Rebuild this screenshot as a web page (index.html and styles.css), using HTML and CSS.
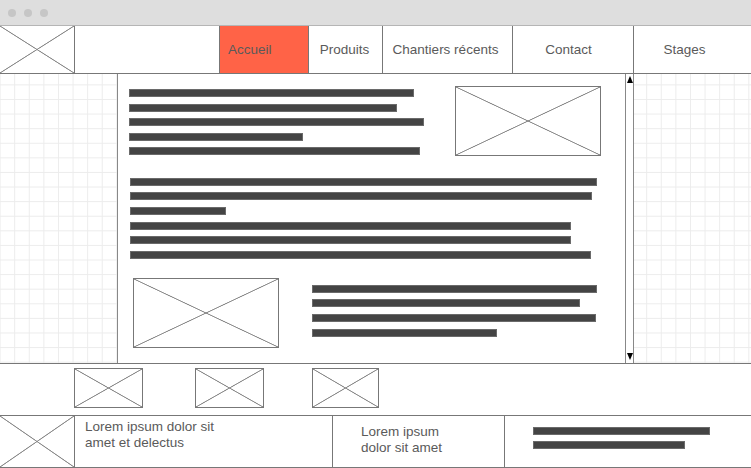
FILE: index.html
```html
<!DOCTYPE html>
<html lang="fr">
<head>
    <meta charset="UTF-8">
    <meta name="viewport" content="width=device-width, initial-scale=1.0">
    <title>Maquette - Accueil</title>
    <link rel="stylesheet" href="styles.css">
</head>
<body>
    <div class="window">
        <div class="titlebar">
            <span class="dot"></span>
            <span class="dot"></span>
            <span class="dot"></span>
        </div>

        <header class="header">
            <div class="logo"><div class="ph ph-bare"></div></div>
            <div class="spacer"></div>
            <nav class="nav">
                <a class="nav-item active" href="#">Accueil</a>
                <a class="nav-item produits" href="#">Produits</a>
                <a class="nav-item chantiers" href="#">Chantiers récents</a>
                <a class="nav-item contact" href="#">Contact</a>
                <a class="nav-item stages" href="#">Stages</a>
            </nav>
        </header>

        <div class="main">
            <div class="gutter gutter-left"></div>
            <div class="content">
                <div class="section1">
                    <div class="lines">
                        <div class="bar" style="width:285px"></div>
                        <div class="bar" style="width:268px"></div>
                        <div class="bar" style="width:295px"></div>
                        <div class="bar" style="width:174px"></div>
                        <div class="bar" style="width:291px"></div>
                    </div>
                    <div class="ph img-top"></div>
                </div>

                <div class="section2 lines">
                    <div class="bar" style="width:467px"></div>
                    <div class="bar" style="width:462px"></div>
                    <div class="bar" style="width:96px"></div>
                    <div class="bar" style="width:441px"></div>
                    <div class="bar" style="width:441px"></div>
                    <div class="bar" style="width:461px"></div>
                </div>

                <div class="section3">
                    <div class="ph img-bottom"></div>
                    <div class="lines">
                        <div class="bar" style="width:285px"></div>
                        <div class="bar" style="width:268px"></div>
                        <div class="bar" style="width:284px"></div>
                        <div class="bar" style="width:185px"></div>
                    </div>
                </div>
            </div>
            <div class="scrollbar">
                <span class="arrow up"></span>
                <span class="arrow down"></span>
            </div>
            <div class="gutter gutter-right"></div>
        </div>

        <div class="strip">
            <div class="ph thumb"></div>
            <div class="ph thumb"></div>
            <div class="ph thumb"></div>
        </div>

        <footer class="footer">
            <div class="logo"><div class="ph ph-bare"></div></div>
            <div class="foot-col foot-one">
                <p>Lorem ipsum dolor sit<br>amet et delectus</p>
            </div>
            <div class="foot-col foot-two">
                <p>Lorem ipsum<br>dolor sit amet</p>
            </div>
            <div class="foot-col foot-three lines">
                <div class="bar" style="width:177px"></div>
                <div class="bar" style="width:152px"></div>
            </div>
        </footer>
    </div>
</body>
</html>
```

FILE: styles.css
```css
body {
    margin: 0;
    font-family: "Liberation Sans", Arial, sans-serif;
    font-size: 13.5px;
    color: #5a5a5a;
    background-color: #fff;
}
.window {
    width: 751px;
    height: 468px;
    overflow: hidden;
}

/* title bar */
.titlebar {
    height: 25px;
    background-color: #dedede;
    border-bottom: 1px solid #b5b5b5;
    display: flex;
    align-items: center;
    gap: 8px;
    padding-left: 8px;
}
.dot {
    width: 8px;
    height: 8px;
    border-radius: 50%;
    background-color: #c6c6c6;
}

/* placeholder picture with a cross */
.ph {
    box-sizing: border-box;
    border: 1px solid #777;
    background:
        linear-gradient(to top right, transparent calc(50% - 0.8px), #8c8c8c calc(50% - 0.2px), #8c8c8c calc(50% + 0.2px), transparent calc(50% + 0.8px)),
        linear-gradient(to bottom right, transparent calc(50% - 0.8px), #8c8c8c calc(50% - 0.2px), #8c8c8c calc(50% + 0.2px), transparent calc(50% + 0.8px));
}
.ph-bare {
    border: none;
    width: 100%;
    height: 100%;
}

/* header */
.header {
    display: flex;
    height: 47px;
    border-bottom: 1px solid #777;
}
.logo {
    width: 74px;
    border-right: 1px solid #777;
    flex: none;
}
.spacer {
    width: 144px;
    flex: none;
}
.nav {
    display: flex;
    flex: 1;
}
.nav-item {
    display: flex;
    align-items: center;
    justify-content: center;
    border-left: 1px solid #777;
    color: #5a5a5a;
    text-decoration: none;
    box-sizing: border-box;
}
.nav-item.active {
    width: 89px;
    background-color: #ff6347;
    justify-content: flex-start;
    padding-left: 8px;
}
.produits { width: 74px; padding-right: 2px; }
.chantiers { width: 130px; padding-right: 4px; }
.contact { width: 121px; padding-right: 9px; }
.stages { width: 118px; padding-right: 16px; }

/* main area */
.main {
    display: flex;
    height: 289px;
    border-bottom: 1px solid #777;
}
.gutter {
    background-image:
        linear-gradient(to right, #ececec 1px, transparent 1px),
        linear-gradient(to bottom, #ececec 1px, transparent 1px);
    background-size: 14.6px 14.6px;
}
.gutter-left {
    width: 117px;
    background-position: 14.2px 10.4px;
}
.gutter-right {
    flex: 1;
    background-position: 12.2px 10.4px;
}
.content {
    width: 508px;
    border-left: 1px solid #888;
    padding: 12px 0 0 11px;
    box-sizing: border-box;
    background-color: #fff;
}
.scrollbar {
    width: 7px;
    border-left: 1px solid #888;
    border-right: 1px solid #888;
    display: flex;
    flex-direction: column;
    justify-content: space-between;
    align-items: center;
    padding: 2px 0 3px;
}
.arrow {
    width: 0;
    height: 0;
    border-left: 3px solid transparent;
    border-right: 3px solid transparent;
}
.arrow.up {
    border-bottom: 7px solid #000;
}
.arrow.down {
    border-top: 7px solid #000;
}

.lines {
    display: flex;
    flex-direction: column;
    gap: 6.6px;
}
.bar {
    height: 8px;
    background-color: #444;
    border: 1px solid #6a6a6a;
    box-sizing: border-box;
}

.section1 {
    display: flex;
    align-items: flex-start;
}
.section1 .lines {
    width: 296px;
    margin-top: 3px;
    gap: 6.5px;
}
.img-top {
    width: 146px;
    height: 70px;
    margin-left: 30px;
}
.section2 {
    margin-top: 21.7px;
    padding-left: 1px;
    gap: 6.7px;
}
.section3 {
    display: flex;
    align-items: flex-start;
    margin-top: 18.4px;
}
.img-bottom {
    width: 146px;
    height: 70px;
    margin-left: 4px;
}
.section3 .lines {
    margin-left: 33px;
    margin-top: 7.3px;
}

/* picture strip */
.strip {
    display: flex;
    height: 52px;
    padding-top: 4px;
    box-sizing: border-box;
    border-bottom: 1px solid #777;
}
.thumb {
    width: 69px;
    height: 40px;
    margin-left: 74px;
}
.thumb:nth-child(2) {
    margin-left: 52px;
}
.thumb:nth-child(3) {
    width: 67px;
    margin-left: 48px;
}

/* footer */
.footer {
    display: flex;
    height: 51px;
    border-bottom: 1px solid #777;
}
.footer p {
    margin: 0;
    line-height: 15.5px;
}
.foot-col {
    box-sizing: border-box;
}
.foot-one {
    width: 258px;
    border-right: 1px solid #777;
    padding: 3px 0 0 10px;
}
.foot-two {
    width: 172px;
    border-right: 1px solid #777;
    padding: 8px 0 0 28px;
}
.foot-three {
    flex: 1;
    padding: 11px 0 0 28px;
    gap: 6.3px;
}
```
